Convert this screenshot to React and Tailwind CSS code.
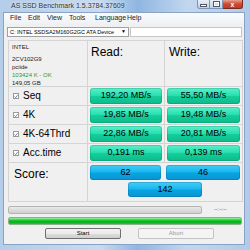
import React from "react";

const green =
  "bg-[linear-gradient(#5cf0cc,#26dfae_48%,#14cf9c_52%,#0fb98a)] rounded-[3px] shadow-[inset_0_0_0_1px_rgba(0,120,80,0.25)]";
const blue =
  "bg-[linear-gradient(#46cdf6,#16b6ee_48%,#07a5e2_52%,#0a95cf)] rounded-[3px] shadow-[inset_0_0_0_1px_rgba(0,80,140,0.25)]";

const rows = [
  { name: "Seq", read: "192,20 MB/s", write: "55,50 MB/s" },
  { name: "4K", read: "19,85 MB/s", write: "19,48 MB/s" },
  { name: "4K-64Thrd", read: "22,86 MB/s", write: "20,81 MB/s" },
  { name: "Acc.time", read: "0,191 ms", write: "0,139 ms" },
];

function Check() {
  return (
    <span className="w-[6px] h-[6px] border border-[#9a9a9a] bg-white flex items-center justify-center">
      <svg width="5" height="5" viewBox="0 0 5 5">
        <path d="M0.5 2.5 L2 4 L4.5 0.8" stroke="#4a5a8a" strokeWidth="0.9" fill="none" />
      </svg>
    </span>
  );
}

export default function App() {
  return (
    <div
      className="w-[250px] h-[250px] overflow-hidden flex flex-col bg-[linear-gradient(90deg,#b4cde8,#c8daef_40%,#8fb6e2_55%,#c2d7ee_75%,#b0cbe8)] text-black"
      style={{ fontFamily: '"Liberation Sans", Arial, sans-serif' }}
    >
      {/* title bar */}
      <div className="h-[12px] flex items-start justify-between">
        <span className="pl-[11px] pt-[1px] text-[7px] leading-[9px] text-[#333] [text-shadow:0_0_3px_#fff]">
          AS SSD Benchmark 1.5.3784.37609
        </span>
        <div className="flex mr-[7px]">
          <span className="w-[13px] h-[9px] rounded-bl-[3px] border border-t-0 border-[#7d94b4] bg-[linear-gradient(#e8eff7,#c0d1e5)] flex items-end justify-center pb-[2px]">
            <span className="w-[5px] h-[1px] bg-white shadow-[0_0_0_1px_#556]"></span>
          </span>
          <span className="w-[13px] h-[9px] border border-l-0 border-t-0 border-[#7d94b4] bg-[linear-gradient(#e8eff7,#c0d1e5)] flex items-center justify-center">
            <span className="w-[5px] h-[4px] border border-white shadow-[0_0_0_1px_#556]"></span>
          </span>
          <span className="w-[20px] h-[9px] rounded-br-[3px] border border-l-0 border-t-0 border-[#7a2a20] bg-[linear-gradient(#e8a08f,#c94a33_50%,#c23a22)] flex items-center justify-center text-white text-[7px] font-bold leading-none">
            x
          </span>
        </div>
      </div>

      {/* client area */}
      <div className="flex-1 ml-[3px] mr-[5px] mb-[5px] bg-[#f0f0f0] flex flex-col border border-[#8aa3c4]">
        {/* menu */}
        <div className="h-[11px] bg-[linear-gradient(#fafbfd,#eef2f8)] flex items-center pl-[6px] text-[7px] text-[#222]">
          <span className="w-[18px]">File</span>
          <span className="w-[19px]">Edit</span>
          <span className="w-[22px]">View</span>
          <span className="w-[26px]">Tools</span>
          <span className="w-[32px]">Language</span>
          <span>Help</span>
        </div>

        {/* drive select */}
        <div className="flex mt-[3px] ml-[3px] h-[10px] gap-[1px]">
          <div className="w-[122px] bg-white border border-[#a0a0a0] flex items-center justify-between px-[2px] text-[5.5px]">
            <span>C: INTEL SSDSA2M160G2GC ATA Device</span>
            <span className="text-[5px]">▼</span>
          </div>
          <div className="w-[112px] bg-white border border-[#c6c6c6]"></div>
        </div>

        {/* results grid */}
        <div className="mt-[3px] ml-[4px] w-[235px] grid grid-cols-[78px_76px_77px] gap-px bg-[#d4d4d4] border border-[#d4d4d4]">
          <div className="h-[45px] bg-[#f0f0f0] pl-[3px] pt-[2px] text-[6px] leading-[8px] text-[#222]">
            <div>INTEL</div>
            <div className="mt-[4px]">2CV102G9</div>
            <div>pciide</div>
            <div className="text-[#2e9a2e]">103424 K - OK</div>
            <div>149,05 GB</div>
          </div>
          <div className="bg-[#f0f0f0] pl-[3px] pt-[4px] text-[12px] leading-[14px]">Read:</div>
          <div className="bg-[#f0f0f0] pl-[4px] pt-[4px] text-[12px] leading-[14px]">Write:</div>

          {rows.map((r) => (
            <React.Fragment key={r.name}>
              <div className="h-[18px] bg-[#f0f0f0] flex items-center pl-[4px] gap-[4px]">
                <Check />
                <span className="text-[10px] leading-none">{r.name}</span>
              </div>
              <div className="bg-[#f0f0f0] px-[2px] py-[1px]">
                <div className={`${green} h-full flex items-center justify-center text-[9px]`}>
                  {r.read}
                </div>
              </div>
              <div className="bg-[#f0f0f0] px-[2px] py-[1px]">
                <div className={`${green} h-full flex items-center justify-center text-[9px]`}>
                  {r.write}
                </div>
              </div>
            </React.Fragment>
          ))}

          <div className="h-[38px] bg-[#f0f0f0] pl-[5px] pt-[4px] text-[12px] leading-[14px]">Score:</div>
          <div className="col-span-2 bg-[#f0f0f0] flex flex-col items-center pt-[2px] gap-[2px]">
            <div className="flex w-full px-[2px] gap-[5px]">
              <div className={`${blue} w-[71px] h-[15px] flex items-center justify-center text-[9px]`}>62</div>
              <div className={`${blue} w-[74px] h-[15px] flex items-center justify-center text-[9px]`}>46</div>
            </div>
            <div className={`${blue} w-[74px] h-[15px] flex items-center justify-center text-[9px]`}>142</div>
          </div>
        </div>

        {/* progress */}
        <div className="flex items-center mt-[4px] ml-[4px] h-[8px]">
          <div className="w-[194px] h-[8px] rounded-[2px] border border-[#b4b4b4] bg-[linear-gradient(#eaeaea,#dcdcdc_50%,#cfcfcf)]"></div>
          <span className="ml-[12px] text-[5px] text-[#555]">--:--:--</span>
        </div>
        <div className="mt-[3px] ml-[4px] w-[234px] h-[8px] rounded-[2px] border border-[#8fb08f] bg-[linear-gradient(#9ef0a0,#22c832_40%,#06b025_60%,#1ac42e)]"></div>

        {/* buttons */}
        <div className="flex mt-[3px] h-[11px]">
          <div className="ml-[41px] w-[76px] rounded-[2px] border border-[#707070] bg-[linear-gradient(#f2f2f2,#ebebeb_50%,#dddddd_51%,#cfcfcf)] flex items-center justify-center text-[6px]">
            Start
          </div>
          <div className="ml-[17px] w-[76px] rounded-[2px] border border-[#c3c3c3] bg-[#f4f4f4] flex items-center justify-center text-[6px] text-[#9a9a9a]">
            Abort
          </div>
        </div>
      </div>
    </div>
  );
}
